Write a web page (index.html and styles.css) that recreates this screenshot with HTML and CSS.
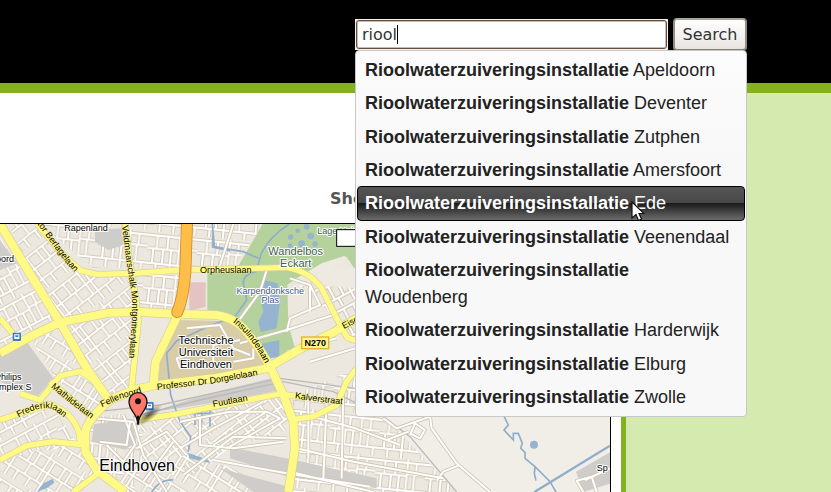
FILE: index.html
```html
<!DOCTYPE html>
<html lang="nl">
<head>
<meta charset="utf-8">
<title>Search</title>
<link rel="stylesheet" href="styles.css">
</head>
<body>
<header class="top">
  <form class="search" role="search">
    <div class="field">
      <input class="query" id="q" type="text" value="riool" aria-label="Search" autocomplete="off">
      <span class="caret"></span>
    </div>
    <button class="submit" type="button">Search</button>
    <ul class="suggestions">
      <li><a href="#"><b>Rioolwaterzuiveringsinstallatie</b> Apeldoorn</a></li>
      <li><a href="#"><b>Rioolwaterzuiveringsinstallatie</b> Deventer</a></li>
      <li><a href="#"><b>Rioolwaterzuiveringsinstallatie</b> Zutphen</a></li>
      <li><a href="#"><b>Rioolwaterzuiveringsinstallatie</b> Amersfoort</a></li>
      <li><a class="active" href="#"><b>Rioolwaterzuiveringsinstallatie</b> <span class="target">Ede<svg class="pointer" viewBox="0 0 14 21" aria-hidden="true"><path d="M1 1V17L5 13.500L7.500 19.500L10.500 18L8 12.500H13Z" fill="#fff" stroke="#111" stroke-width="1.200"/></svg></span></a></li>
      <li><a href="#"><b>Rioolwaterzuiveringsinstallatie</b> Veenendaal</a></li>
      <li><a href="#"><b>Rioolwaterzuiveringsinstallatie</b> Woudenberg</a></li>
      <li><a href="#"><b>Rioolwaterzuiveringsinstallatie</b> Harderwijk</a></li>
      <li><a href="#"><b>Rioolwaterzuiveringsinstallatie</b> Elburg</a></li>
      <li><a href="#"><b>Rioolwaterzuiveringsinstallatie</b> Zwolle</a></li>
    </ul>
  </form>
</header>
<main class="page">
  <section class="content">
    <h2 class="caption">Show</h2>
    <div class="map">
      <svg viewBox="0 27 1830 804" role="img" aria-label="Eindhoven">
        <defs>
          <g id="cellA"><path d="M0 12H150M0 52H95M95 46H150M0 96H150M28 12V52M60 12V52M95 0V96M122 12V46M18 52V96M48 52V96M72 52V120M118 46V96M136 96V120M30 96V120"/></g>
          <g id="cellB"><path d="M0 20H110M0 62H75V100M20 20V62M42 20V62M75 0V62M92 20V130M75 62H110M0 100H110M34 62V100M54 100V130M12 100V130"/></g>
          <pattern id="pA" width="150" height="120" patternUnits="userSpaceOnUse" patternTransform="rotate(-28)"><use href="#cellA" class="casing"/><use href="#cellA" class="lane"/></pattern>
          <pattern id="pB" width="110" height="130" patternUnits="userSpaceOnUse" patternTransform="rotate(32)"><use href="#cellB" class="casing"/><use href="#cellB" class="lane"/></pattern>
          <pattern id="pC" width="150" height="120" patternUnits="userSpaceOnUse" patternTransform="rotate(6)"><use href="#cellA" class="casing"/><use href="#cellA" class="lane"/></pattern>
          <pattern id="pD" width="110" height="130" patternUnits="userSpaceOnUse" patternTransform="rotate(-38)"><use href="#cellB" class="casing"/><use href="#cellB" class="lane"/></pattern>
          <radialGradient id="shade"><stop offset="0" stop-color="#222" stop-opacity=".75"/><stop offset="1" stop-color="#222" stop-opacity="0"/></radialGradient>
          <path id="berlage" d="M112 27L150 80L195 140L250 200"/>
          <path id="montgomery" d="M366 32L378 130L396 250L396 310L384 470"/>
          <path id="insulinde" d="M698 322Q755 362 805 465"/>
          <path id="dorgelo" d="M472 525L640 505L810 474"/>
          <path id="fuut" d="M640 576L780 550"/>
          <path id="kalver" d="M884 550L960 561L1060 571"/>
          <path id="fellen" d="M306 577L360 552L450 526"/>
          <path id="mathilde" d="M152 517L205 560L295 628"/>
          <path id="frederik" d="M55 607Q130 566 165 586L225 634"/>
          <g id="streets">
            <path d="M1290 605L1295 640L1370 745L1470 831M1310 797L1330 770L1375 752M1150 610L1190 640L1290 605M1230 660L1245 625L1275 645L1260 670L1230 655M1750 831L1730 797L1775 785L1790 831M1755 795L1830 760M1160 675L1225 650"/>
            <path d="M710 325L780 230L800 165M720 385L860 345L1000 300M540 620L690 590L800 590L840 610M600 610V690L700 700L850 680M540 700L640 640L790 560M640 690L800 590M680 700L840 610M550 780L700 665L860 670M560 340L660 330L700 400L750 420M540 460L530 430L600 410M640 440V390L720 375M700 440L760 430V400M890 700L1060 740L1330 790M870 770L1120 831M640 735L860 775L1110 815M925 560V730M980 560L970 790M1030 510L1025 790M920 600L1066 640L1200 690M700 27L660 150M870 190L930 210L960 270L870 310L860 350M930 210V290M860 410L1010 370M930 440L1066 400M280 610L400 620L430 720L500 831M390 620L380 690L300 680M410 700L500 650L560 720M430 800L520 680M370 600L405 690L370 740L320 690"/>
          </g>
          <g id="arterials">
            <path d="M0 27L80 160L180 322L260 460L330 560M0 415L100 360L180 322L330 293L420 291L535 297L650 300Q700 308 730 340Q780 395 815 465L850 540L880 620L885 700L865 831M535 297L500 370L467 440L460 512M375 831L290 765L256 710V650Q265 610 330 555L400 525L470 510L640 490L800 460L900 402L1000 352L1070 310"/>
          </g>
          <g id="avenues">
            <path d="M112 27L190 120L240 166L290 178L400 175L540 165L760 160L860 157Q930 170 965 220L1010 310L1042 368L1070 378M375 27L388 130L408 250L415 320L405 420L394 525M415 614L520 599L700 563L840 537L920 548M880 613L940 605L1010 570L1040 500L1070 460M60 536L120 555L180 483L240 469L275 492M150 500L275 605M0 615L60 595L150 568Q215 590 236 650L243 690M0 735L80 692L160 680L255 690M220 831L295 775M0 310L38 355"/>
          </g>
          <path id="highway" d="M561 20L556 170Q550 250 532 291"/>
        </defs>

        <rect y="27" width="1830" height="804" fill="#ece8df"/>
        <path fill="url(#pD)" d="M25 27H125L240 180L395 180L410 290L180 315L90 160Z"/>
        <path fill="url(#pC)" d="M120 27H790L700 160H280Z"/>
        <path fill="url(#pA)" d="M0 70L90 190L175 320L0 405Z"/>
        <path fill="url(#pC)" d="M410 180H540V290H415Z"/>
        <path fill="url(#pB)" d="M90 365L180 330L330 560L270 600L160 480Z"/>
        <path fill="url(#pD)" d="M195 330L410 300L395 525L335 545Z"/>
        <path fill="url(#pA)" d="M0 620L160 580L235 690L0 730Z"/>
        <path fill="url(#pB)" d="M0 740L160 690L250 700L290 770L230 831H0Z"/>
        <path fill="url(#pC)" d="M270 610L400 590L440 700L400 831H370L270 720Z"/>
        <path fill="url(#pD)" d="M420 620L850 540L880 640L690 700L560 790L430 760Z"/>
        <path fill="url(#pB)" d="M310 780L560 720L700 760L860 831H370Z"/>
        <path fill="url(#pC)" d="M880 540L1070 460L1160 610L1370 831H870Z"/>
        <path fill="url(#pA)" d="M890 185L1066 200V370L1020 320Z"/>
        <path fill="#f1eee7" d="M1150 600H1830V831H1370Z"/>

        <path fill="#cfcdca" d="M0 75L52 145L0 165ZM0 415L80 380L160 490L112 545L0 500ZM285 45L365 40L370 90L325 105L285 80ZM282 628L392 612L410 680L375 704L275 680ZM455 592L600 543L830 485L845 525L660 560ZM690 697L870 732L1130 790L1130 820L865 785L690 730ZM660 760L865 815V831H760ZM1728 770L1830 712V806L1750 831Z"/>
        <path fill="#d9cda8" d="M535 315L690 318L750 360L795 448L640 482L475 500L480 440Z"/>
        <path fill="#e3c4c0" d="M568 202H617V275L568 288Z"/>
        <path fill="#b5d29c" d="M788 27H1066V165L1040 125L940 172L890 190L862 210L865 330L885 400L830 432L780 380L712 306L622 290V168L708 165Z"/>
        <path fill="#eeeae2" d="M890 190L965 145L1035 122L1038 137L995 152L1002 162L1066 158V220L960 210Z"/>
        <path fill="url(#pA)" d="M895 210L960 215L1066 225V370L1020 320Z"/>
        <g fill="#96b3d0">
          <path d="M790 195L832 205L840 260L830 340L782 351L775 320L790 290L780 240ZM778 388L838 375V425L810 430L785 405ZM110 831L130 805L158 792L163 803L140 820ZM565 714L625 734L630 744L568 730ZM636 50L645 92L690 102V110L635 98Z"/>
          <circle cx="872" cy="66" r="8"/><circle cx="893" cy="47" r="7"/><circle cx="920" cy="35" r="9"/><circle cx="932" cy="63" r="10"/><circle cx="905" cy="86" r="10"/><circle cx="870" cy="92" r="7"/><circle cx="945" cy="87" r="8"/><circle cx="1602" cy="689" r="12"/>
        </g>
        <g class="water">
          <path d="M868 27Q812 62 785 112L768 170Q728 180 730 205L740 255L705 305L640 328L530 378L500 415L512 540L540 620L572 665L565 710M637 27L643 96L730 110L775 130M455 831Q480 792 520 795M575 595H640M585 580V630M605 580V630M630 585V635"/>
          <path d="M1510 600L1525 630L1512 645L1540 675L1540 655L1555 655L1567 685L1562 700L1575 712V730L1605 755L1650 800L1668 831M1605 755L1603 775L1608 797"/>
          <path class="canal" d="M1603 831L1830 692"/>
        </g>
        <path class="rail" d="M400 605L600 555L850 500L1000 530L1150 605L1230 665L1370 831M290 590L480 570L840 490L1066 520"/>

        <use href="#streets" class="casing"/>
        <use href="#streets" class="lane"/>
        <use href="#avenues" class="avenue-edge"/>
        <use href="#arterials" class="arterial-edge"/>
        <use href="#avenues" class="avenue"/>
        <use href="#arterials" class="arterial"/>
        <use href="#highway" class="highway-edge"/>
        <use href="#highway" class="highway"/>

        <g fill="#3c7fc0"><rect x="38" y="353" width="25" height="25" rx="3"/><rect x="436" y="561" width="25" height="25" rx="3"/></g>
        <path fill="#fff" fill-rule="evenodd" d="M43 358H58V372H43ZM46 361V366H55V361ZM441 566H456V580H441ZM444 569V574H453V569Z"/>

        <g class="street-name">
          <text><textPath href="#berlage">tor Berlagelaan</textPath></text>
          <text><textPath href="#montgomery">Veldmaarschalk Montgomerylaan</textPath></text>
          <text><textPath href="#insulinde">Insulindelaan</textPath></text>
          <text><textPath href="#dorgelo">Professor Dr Dorgelolaan</textPath></text>
          <text><textPath href="#fuut">Fuutlaan</textPath></text>
          <text><textPath href="#kalver">Kalverstraat</textPath></text>
          <text><textPath href="#fellen">Fellenoord</textPath></text>
          <text><textPath href="#mathilde">Mathildelaan</textPath></text>
          <text><textPath href="#frederik">Frederiklaan</textPath></text>
          <text x="600" y="173">Orpheuslaan</text>
          <text transform="translate(1032 342) rotate(-28)">Eisen</text>
        </g>
        <g class="place">
          <text x="193" y="47">Rapenland</text>
          <text x="-12" y="141">oord</text>
          <text x="-15" y="496">Philips</text>
          <text x="-18" y="525">omplex S</text>
          <text x="1790" y="768">Sp</text>
          <text class="lake" x="811" y="237" text-anchor="middle">Karpendonksche</text>
          <text class="lake" x="811" y="264" text-anchor="middle">Plas</text>
          <text class="park" x="952" y="57">Lage Heide</text>
        </g>
        <g class="district" text-anchor="middle">
          <text x="618" y="387">Technische</text>
          <text x="618" y="423">Universiteit</text>
          <text x="618" y="458">Eindhoven</text>
          <text class="park" x="887" y="120">Wandelbos</text>
          <text class="park" x="887" y="155">Eckart</text>
        </g>
        <text class="city" x="298" y="768">Eindhoven</text>
        <rect x="905" y="366" width="81" height="35" fill="#fff58c" stroke="#e0b32c" stroke-width="4"/>
        <text class="shield" x="946" y="393" text-anchor="middle">N270</text>

        <ellipse cx="447" cy="600" rx="48" ry="16" fill="url(#shade)" transform="rotate(-38 447 600)"/>
        <path fill="#ff776b" stroke="#111" stroke-width="4" d="M414 626C412 595 387 587 387 560A27 27 0 0 1 441 560C441 587 416 595 414 626Z"/>
        <path stroke="#111" stroke-width="7" d="M414 602V629"/>
        <circle cx="414" cy="559" r="9" fill="#111"/>
        <rect x="1010" y="44" width="120" height="50" fill="#fff" stroke="#000" stroke-width="3"/>
      </svg>
    </div>
  </section>
  <aside class="sidebar"></aside>
</main>
</body>
</html>
```
FILE: styles.css
```css
* { box-sizing: border-box; }

body {
  margin: 0;
  min-height: 100vh;
  display: flex;
  flex-direction: column;
  background: #fff;
  font-family: "DejaVu Sans", sans-serif;
  font-size: 16px;
  color: #222;
}

.top {
  display: flex;
  justify-content: flex-end;
  padding: 18px 84px 32px;
  background: #000;
  border-bottom: 10px solid #86b11f;
}

.search {
  position: relative;
  display: flex;
  align-items: center;
  gap: 5px;
  width: 392px;
}

.field {
  position: relative;
  flex: 1;
  display: flex;
  background: #f4f0ea;
  padding: 1px;
}

.query {
  flex: 1;
  min-width: 0;
  height: 29px;
  padding: 0 5px;
  border: 1px solid #674c42;
  border-radius: 3px;
  box-shadow: inset 0 0 0 1px #cbbbb0;
  background: #fff;
  font: inherit;
  color: #333;
  outline: 0;
}

.caret {
  position: absolute;
  left: 42px;
  top: 6px;
  width: 1px;
  height: 19px;
  background: #000;
}

.submit {
  width: 74px;
  height: 33px;
  padding: 0;
  border: 2px solid #948d82;
  border-color: #aaa398 #948d82 #857e74;
  border-radius: 4px;
  background: linear-gradient(#fefefe, #f3f1ef 60%, #e6e3df);
  font: inherit;
  color: #333;
}

.suggestions {
  position: absolute;
  z-index: 1;
  top: 32px;
  left: 0;
  right: 0;
  min-height: 367px;
  display: flex;
  flex-direction: column;
  justify-content: space-between;
  margin: 0;
  padding: 2px 1px 3px;
  list-style: none;
  border: 1px solid #c8c8c8;
  border-radius: 4px;
  background: linear-gradient(#fcfcfc, #f8f8f8 30%);
  font-family: "Liberation Sans", sans-serif;
  font-size: 18px;
  line-height: 27px;
}

.suggestions li { margin-bottom: -2px; }

.suggestions a {
  display: block;
  padding: 3px 12px 3px 7px;
  border: 1px solid transparent;
  border-radius: 4px;
  color: #222;
  text-decoration: none;
}

.suggestions .active {
  border-color: #000;
  background: linear-gradient(#555, #484848 49%, #1c1c1c 50%, #6c6c6c);
  color: #fff;
}

.target { position: relative; }

.pointer {
  position: absolute;
  left: -3px;
  top: 8px;
  width: 14px;
  height: 21px;
}

.page {
  flex: 1;
  display: flex;
}

.content {
  flex: 1;
  min-width: 0;
  padding-right: 10px;
}

.caption {
  margin: 0;
  padding: 97px 0 15px 330px;
  font-size: 16px;
  line-height: 18px;
  color: #555;
}

.map {
  border-top: 1px solid #000;
  border-right: 1px solid #000;
}

.map svg {
  display: block;
  width: 100%;
}

.sidebar {
  flex: 0 0 210px;
  border-left: 5px solid #86b11f;
  background: #d5eaaf;
}

.map use {
  fill: none;
  stroke-linejoin: round;
}

.casing { stroke: #cfc4b0; stroke-width: 11; }
.lane { stroke: #fff; stroke-width: 6; }
.avenue-edge { stroke: #d6cf9c; stroke-width: 20; }
.avenue { stroke: #fff986; stroke-width: 16; }
.arterial-edge { stroke: #d6cf9c; stroke-width: 28; }
.arterial { stroke: #fff986; stroke-width: 24; }
.highway-edge { stroke: #cf8a32; stroke-width: 36; stroke-linecap: round; }
.highway { stroke: #ffbe48; stroke-width: 31; stroke-linecap: round; }

.water { fill: none; stroke: #8fadcb; stroke-width: 5; }
.canal { stroke-width: 7; }
.rail { fill: none; stroke: #bbb9b8; stroke-width: 4; }

.map text {
  font-family: "Liberation Sans", sans-serif;
  font-size: 27px;
  fill: #000;
  stroke: #fff;
  stroke-width: 6px;
  stroke-linejoin: round;
  paint-order: stroke;
}

.map .street-name text { stroke: #fff986; stroke-width: 2px; }
.map .district text { font-size: 33px; }
.map .city { font-size: 48px; }
.map .lake { fill: #46549b; }
.map .park { fill: #3c6048; }
.map .shield { font-weight: bold; stroke: none; }
```
